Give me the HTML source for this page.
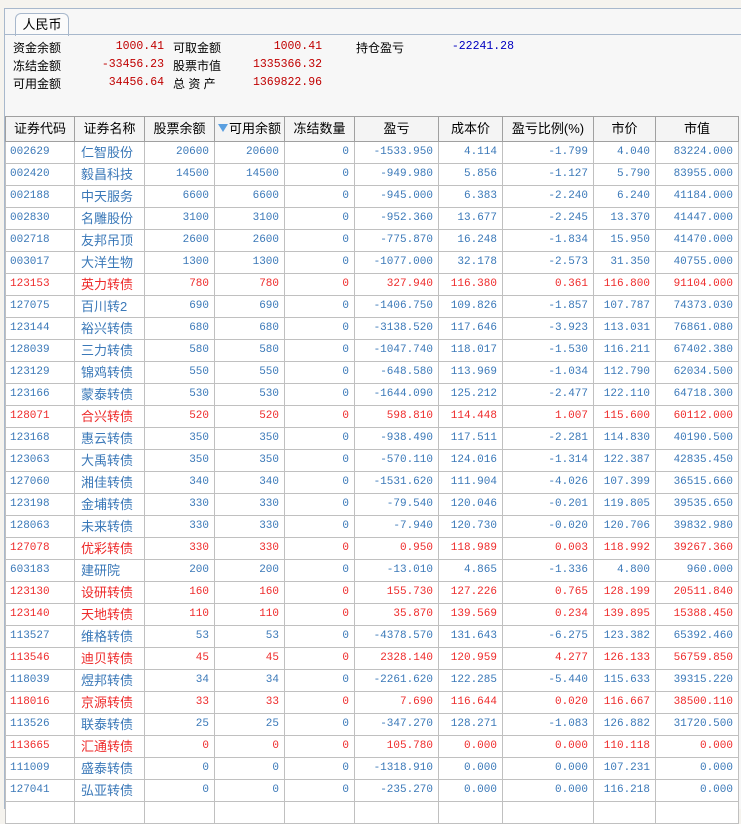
<!DOCTYPE html>
<html><head><meta charset="utf-8"><style>
body{margin:0;width:741px;height:808px;overflow:hidden;background:#f5f3ee;font-family:"Liberation Sans","Noto Sans CJK SC",sans-serif;position:relative}
#panel{position:absolute;left:4px;top:8px;width:737px;height:800px;background:#f7f7f7;border-top:1px solid #a8b8cc;border-left:1px solid #a8b8cc}
#tab{position:absolute;left:10px;top:4px;width:52px;height:22px;background:#fbfbfb;border:1px solid #a8b8cc;border-bottom:none;border-radius:6px 6px 0 0;font-size:13px;text-align:center;line-height:22px;color:#000}
#tabline{position:absolute;left:0;top:25px;width:737px;border-top:1px solid #a8b8cc}
.s{position:absolute;font-size:12px;color:#000;white-space:nowrap}
.v{position:absolute;font-family:"Liberation Mono",monospace;font-size:11.5px;color:#c00000;text-align:right}
table{position:absolute;left:5px;top:116px;width:733px;border-collapse:collapse;table-layout:fixed;background:#fff}
td,th{border:1px solid #c0c0c0;height:21px;padding:0 5px;white-space:nowrap;overflow:hidden;line-height:21px}
th{background:#f4f4f4;font-weight:normal;font-size:13px;color:#000;height:24px;line-height:24px;border-color:#a0a0a0;text-align:center;padding:0}
td{font-family:"Liberation Mono",monospace;font-size:11px;color:#3a78b8;text-align:right}
td:first-child{text-align:left;padding-left:4px}
td:nth-child(2){text-align:left;font-family:"Liberation Sans","Noto Sans CJK SC",sans-serif;font-size:13px;padding-left:6px;line-height:19px}
tr.r td{color:#ee2a2a}
.tri{display:inline-block;width:0;height:0;border-left:5px solid transparent;border-right:5px solid transparent;border-top:8px solid #5a9fe0;vertical-align:1px;margin-right:1px}
</style></head><body>
<div id="panel">
<div id="tab">人民币</div><div id="tabline"></div>
</div>
<div class="s" style="left:13px;top:39px">资金余额</div><div class="v" style="left:80px;width:84px;top:40px">1000.41</div>
<div class="s" style="left:173px;top:39px">可取金额</div><div class="v" style="left:240px;width:82px;top:40px">1000.41</div>
<div class="s" style="left:356px;top:39px">持仓盈亏</div><div class="v" style="left:420px;width:94px;top:40px;color:#0000c0">-22241.28</div>
<div class="s" style="left:13px;top:57px">冻结金额</div><div class="v" style="left:80px;width:84px;top:58px">-33456.23</div>
<div class="s" style="left:173px;top:57px">股票市值</div><div class="v" style="left:240px;width:82px;top:58px">1335366.32</div>
<div class="s" style="left:13px;top:75px">可用金额</div><div class="v" style="left:80px;width:84px;top:76px">34456.64</div>
<div class="s" style="left:173px;top:75px">总 资 产</div><div class="v" style="left:240px;width:82px;top:76px">1369822.96</div>
<table>
<colgroup><col style="width:69px"><col style="width:70px"><col style="width:70px"><col style="width:70px"><col style="width:70px"><col style="width:84px"><col style="width:64px"><col style="width:91px"><col style="width:62px"><col style="width:83px"></colgroup>
<tr><th>证券代码</th><th>证券名称</th><th>股票余额</th><th><span class="tri"></span>可用余额</th><th>冻结数量</th><th>盈亏</th><th>成本价</th><th>盈亏比例(%)</th><th>市价</th><th>市值</th></tr>
<tr><td>002629</td><td>仁智股份</td><td>20600</td><td>20600</td><td>0</td><td>-1533.950</td><td>4.114</td><td>-1.799</td><td>4.040</td><td>83224.000</td></tr>
<tr><td>002420</td><td>毅昌科技</td><td>14500</td><td>14500</td><td>0</td><td>-949.980</td><td>5.856</td><td>-1.127</td><td>5.790</td><td>83955.000</td></tr>
<tr><td>002188</td><td>中天服务</td><td>6600</td><td>6600</td><td>0</td><td>-945.000</td><td>6.383</td><td>-2.240</td><td>6.240</td><td>41184.000</td></tr>
<tr><td>002830</td><td>名雕股份</td><td>3100</td><td>3100</td><td>0</td><td>-952.360</td><td>13.677</td><td>-2.245</td><td>13.370</td><td>41447.000</td></tr>
<tr><td>002718</td><td>友邦吊顶</td><td>2600</td><td>2600</td><td>0</td><td>-775.870</td><td>16.248</td><td>-1.834</td><td>15.950</td><td>41470.000</td></tr>
<tr><td>003017</td><td>大洋生物</td><td>1300</td><td>1300</td><td>0</td><td>-1077.000</td><td>32.178</td><td>-2.573</td><td>31.350</td><td>40755.000</td></tr>
<tr class="r"><td>123153</td><td>英力转债</td><td>780</td><td>780</td><td>0</td><td>327.940</td><td>116.380</td><td>0.361</td><td>116.800</td><td>91104.000</td></tr>
<tr><td>127075</td><td>百川转2</td><td>690</td><td>690</td><td>0</td><td>-1406.750</td><td>109.826</td><td>-1.857</td><td>107.787</td><td>74373.030</td></tr>
<tr><td>123144</td><td>裕兴转债</td><td>680</td><td>680</td><td>0</td><td>-3138.520</td><td>117.646</td><td>-3.923</td><td>113.031</td><td>76861.080</td></tr>
<tr><td>128039</td><td>三力转债</td><td>580</td><td>580</td><td>0</td><td>-1047.740</td><td>118.017</td><td>-1.530</td><td>116.211</td><td>67402.380</td></tr>
<tr><td>123129</td><td>锦鸡转债</td><td>550</td><td>550</td><td>0</td><td>-648.580</td><td>113.969</td><td>-1.034</td><td>112.790</td><td>62034.500</td></tr>
<tr><td>123166</td><td>蒙泰转债</td><td>530</td><td>530</td><td>0</td><td>-1644.090</td><td>125.212</td><td>-2.477</td><td>122.110</td><td>64718.300</td></tr>
<tr class="r"><td>128071</td><td>合兴转债</td><td>520</td><td>520</td><td>0</td><td>598.810</td><td>114.448</td><td>1.007</td><td>115.600</td><td>60112.000</td></tr>
<tr><td>123168</td><td>惠云转债</td><td>350</td><td>350</td><td>0</td><td>-938.490</td><td>117.511</td><td>-2.281</td><td>114.830</td><td>40190.500</td></tr>
<tr><td>123063</td><td>大禹转债</td><td>350</td><td>350</td><td>0</td><td>-570.110</td><td>124.016</td><td>-1.314</td><td>122.387</td><td>42835.450</td></tr>
<tr><td>127060</td><td>湘佳转债</td><td>340</td><td>340</td><td>0</td><td>-1531.620</td><td>111.904</td><td>-4.026</td><td>107.399</td><td>36515.660</td></tr>
<tr><td>123198</td><td>金埔转债</td><td>330</td><td>330</td><td>0</td><td>-79.540</td><td>120.046</td><td>-0.201</td><td>119.805</td><td>39535.650</td></tr>
<tr><td>128063</td><td>未来转债</td><td>330</td><td>330</td><td>0</td><td>-7.940</td><td>120.730</td><td>-0.020</td><td>120.706</td><td>39832.980</td></tr>
<tr class="r"><td>127078</td><td>优彩转债</td><td>330</td><td>330</td><td>0</td><td>0.950</td><td>118.989</td><td>0.003</td><td>118.992</td><td>39267.360</td></tr>
<tr><td>603183</td><td>建研院</td><td>200</td><td>200</td><td>0</td><td>-13.010</td><td>4.865</td><td>-1.336</td><td>4.800</td><td>960.000</td></tr>
<tr class="r"><td>123130</td><td>设研转债</td><td>160</td><td>160</td><td>0</td><td>155.730</td><td>127.226</td><td>0.765</td><td>128.199</td><td>20511.840</td></tr>
<tr class="r"><td>123140</td><td>天地转债</td><td>110</td><td>110</td><td>0</td><td>35.870</td><td>139.569</td><td>0.234</td><td>139.895</td><td>15388.450</td></tr>
<tr><td>113527</td><td>维格转债</td><td>53</td><td>53</td><td>0</td><td>-4378.570</td><td>131.643</td><td>-6.275</td><td>123.382</td><td>65392.460</td></tr>
<tr class="r"><td>113546</td><td>迪贝转债</td><td>45</td><td>45</td><td>0</td><td>2328.140</td><td>120.959</td><td>4.277</td><td>126.133</td><td>56759.850</td></tr>
<tr><td>118039</td><td>煜邦转债</td><td>34</td><td>34</td><td>0</td><td>-2261.620</td><td>122.285</td><td>-5.440</td><td>115.633</td><td>39315.220</td></tr>
<tr class="r"><td>118016</td><td>京源转债</td><td>33</td><td>33</td><td>0</td><td>7.690</td><td>116.644</td><td>0.020</td><td>116.667</td><td>38500.110</td></tr>
<tr><td>113526</td><td>联泰转债</td><td>25</td><td>25</td><td>0</td><td>-347.270</td><td>128.271</td><td>-1.083</td><td>126.882</td><td>31720.500</td></tr>
<tr class="r"><td>113665</td><td>汇通转债</td><td>0</td><td>0</td><td>0</td><td>105.780</td><td>0.000</td><td>0.000</td><td>110.118</td><td>0.000</td></tr>
<tr><td>111009</td><td>盛泰转债</td><td>0</td><td>0</td><td>0</td><td>-1318.910</td><td>0.000</td><td>0.000</td><td>107.231</td><td>0.000</td></tr>
<tr><td>127041</td><td>弘亚转债</td><td>0</td><td>0</td><td>0</td><td>-235.270</td><td>0.000</td><td>0.000</td><td>116.218</td><td>0.000</td></tr>
<tr><td></td><td></td><td></td><td></td><td></td><td></td><td></td><td></td><td></td><td></td></tr>
</table>
</body></html>
